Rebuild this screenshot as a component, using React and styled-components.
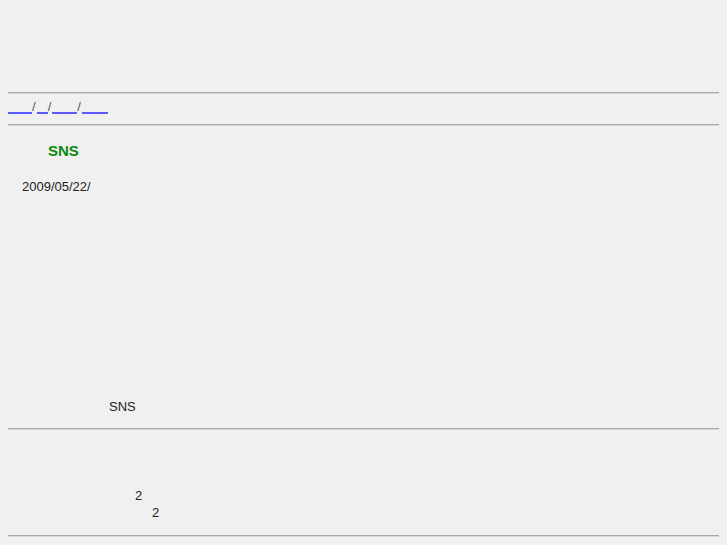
import styled, { createGlobalStyle } from 'styled-components';

const GlobalStyle = createGlobalStyle`
	html, body {
		background: #f0f0f0;
	}
	body {
		margin: 8px;
		font-family: "Liberation Sans", Arial, "Noto Sans CJK JP", sans-serif;
		color: #222;
	}
`;

const Page = styled.div`
	display: flex;
	flex-direction: column;
`;

const Header = styled.div`
	height: 84px;
`;

const Rule = styled.hr`
	margin: 0;
	border: none;
	border-top: 1px solid #a8a8a8;
	border-bottom: 1px solid #d8d8d8;
	height: 0;
`;

const Nav = styled.nav`
	height: 30px;
	box-sizing: border-box;
	padding-top: 7px;
	font-size: 13px;
	line-height: 16px;
	white-space: nowrap;
`;

const NavLink = styled.a`
	display: inline-block;
	vertical-align: top;
	width: ${(p) => p.$w}px;
	height: 11px;
	border-bottom: 2px solid #5a5aff;
	color: #5a5aff;
`;

const Slash = styled.span`
	display: inline-block;
	vertical-align: top;
	color: #555;
	line-height: 12px;
	margin-right: 1px;
`;

const Title = styled.h1`
	margin: 16px 0 0 40px;
	font-size: 15px;
	line-height: 18px;
	font-weight: bold;
	color: #0a8a0a;
`;

const DateLine = styled.p`
	margin: 19px 0 0 14px;
	font-size: 13px;
	line-height: 16px;
`;

const Body = styled.div`
	height: 204px;
`;

const Note = styled.p`
	margin: ${(p) => p.$top || 0}px 0 0 ${(p) => p.$indent}px;
	font-size: 13px;
	line-height: 16px;
`;

const Gap = styled.div`
	height: 13px;
`;

const Footer = styled.div`
	padding-top: 58px;
	height: 105px;
	box-sizing: border-box;
`;

const links = [24, 11, 25, 26];

export default function App() {
	return (
		<Page>
			<GlobalStyle />
			<Header />
			<Rule />
			<Nav>
				{links.map((w, i) => (
					<span key={i}>
						<NavLink href="#" $w={w} aria-label="link" />
						{i < links.length - 1 && <Slash>/</Slash>}
					</span>
				))}
			</Nav>
			<Rule />
			<Title>SNS</Title>
			<DateLine>2009/05/22/</DateLine>
			<Body />
			<Note $indent={101}>SNS</Note>
			<Gap />
			<Rule />
			<Footer>
				<Note $indent={127}>2</Note>
				<Note $indent={144} $top={1}>2</Note>
			</Footer>
			<Rule />
		</Page>
	);
}
